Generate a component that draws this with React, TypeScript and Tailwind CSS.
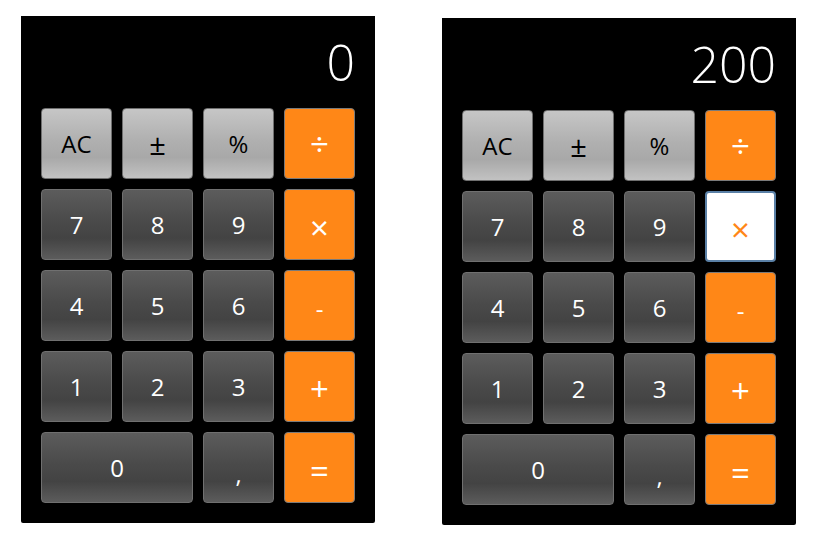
type Kind = "fn" | "num" | "op" | "active";

type Key = { label: string; kind: Kind; wide?: boolean; sym?: string };

const kindClass: Record<Kind, string> = {
  fn: "bg-[linear-gradient(to_bottom,#c6c6c6_0%,#b0b0b0_45%,#a8a8a8_70%,#c2c2c2_100%)] border-[#6f6f6f] text-black",
  num: "bg-[linear-gradient(to_bottom,#5c5c5c_0%,#4a4a4a_45%,#434343_70%,#5c5c5c_100%)] border-[#707070] text-white",
  op: "bg-[#ff8717] border-[#7a7a7a] text-white",
  active: "bg-white border-[#5a80a6] border-2 text-[#ff8717]",
};

// symbol glyphs are drawn bigger than digits in the reference font
const big = "text-[33px]";

function keysFor(multActive: boolean): Key[] {
  return [
    { label: "AC", kind: "fn" },
    { label: "±", kind: "fn", sym: "text-[29px]" },
    { label: "%", kind: "fn" },
    { label: "÷", kind: "op", sym: big },
    { label: "7", kind: "num" },
    { label: "8", kind: "num" },
    { label: "9", kind: "num" },
    { label: "×", kind: multActive ? "active" : "op", sym: `${big} translate-y-[3px]` },
    { label: "4", kind: "num" },
    { label: "5", kind: "num" },
    { label: "6", kind: "num" },
    { label: "-", kind: "op", sym: "translate-y-[3px]" },
    { label: "1", kind: "num" },
    { label: "2", kind: "num" },
    { label: "3", kind: "num" },
    { label: "+", kind: "op", sym: `${big} translate-y-[2px]` },
    { label: "0", kind: "num", wide: true },
    { label: ",", kind: "num", sym: "translate-y-[6px]" },
    { label: "=", kind: "op", sym: `${big} translate-y-[3px]` },
  ];
}

function Calculator({ value, multActive }: { value: string; multActive: boolean }) {
  return (
    <div className="w-[354px] h-[507px] bg-black p-5 rounded-b-[2px]">
      <div className="h-[72px] pt-px text-right text-white text-[50px] leading-[50px] font-light">
        {value}
      </div>
      <div className="grid grid-cols-[repeat(4,71px)] grid-rows-[repeat(5,71px)] gap-x-[10px] gap-y-[10px]">
        {keysFor(multActive).map((k) => (
          <button
            key={k.label}
            className={`flex items-center justify-center rounded-[4px] border text-[24px] leading-none ${kindClass[k.kind]} ${k.wide ? "col-span-2" : ""}`}
          >
            <span className={k.sym ?? ""}>{k.label}</span>
          </button>
        ))}
      </div>
    </div>
  );
}

export default function App() {
  return (
    <div
      className="w-[819px] h-[544px] bg-white flex items-start gap-[67px] pl-[21px] pt-[16px]"
      style={{ fontFamily: '"Open Sans", "Noto Sans", sans-serif' }}
    >
      <Calculator value="0" multActive={false} />
      <div className="mt-[2px]">
        <Calculator value="200" multActive={true} />
      </div>
    </div>
  );
}
